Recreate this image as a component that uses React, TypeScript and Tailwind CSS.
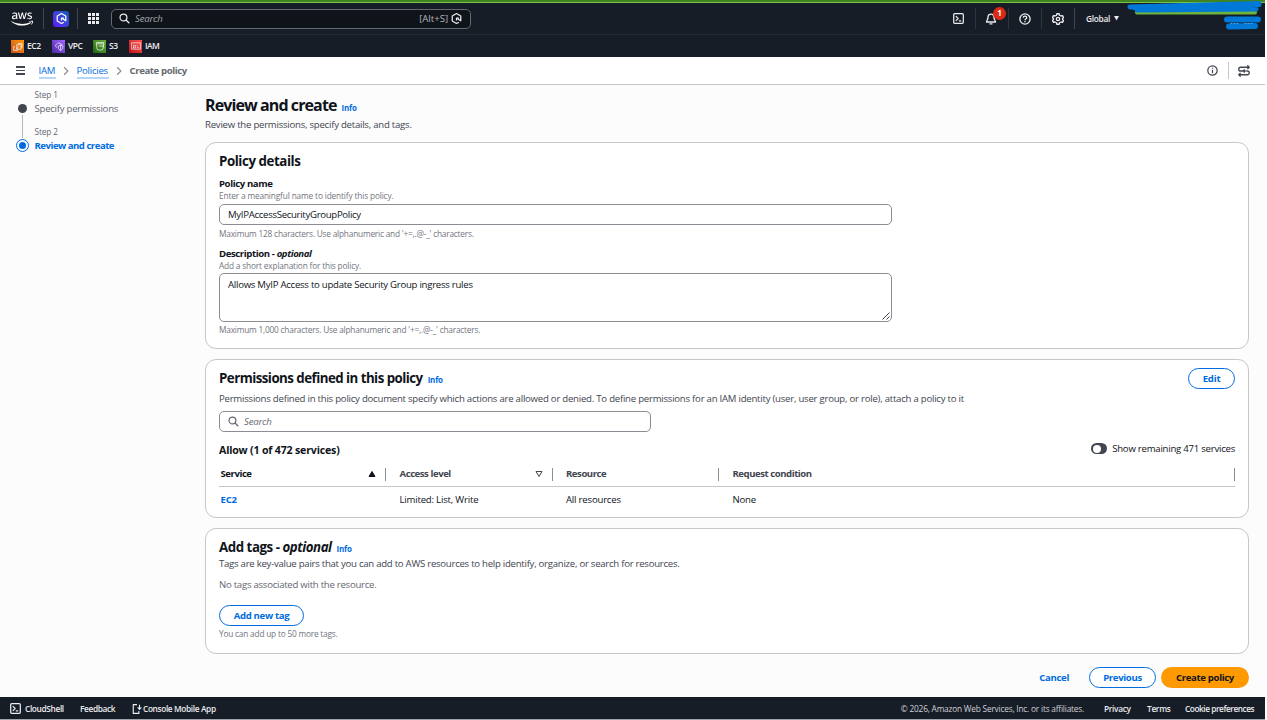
import React from 'react';
import { FaAws } from 'react-icons/fa';

const SERVICES = [
  { name: 'EC2', box: 'w-[41px]', bg: 'from-[#c8511b] to-[#ff9900]', tracking: 'tracking-[-0.45px]', icon: <path d="M6 6h7v7H6zM3 9H1v6h6v-2M8.500 6V4h6v6h-2M9 9L5 13" /> },
  { name: 'VPC', box: 'w-[41px]', bg: 'from-[#4d27a8] to-[#a166ff]', tracking: 'tracking-[-0.45px]', icon: <path d="M5 10H4a3 3 0 0 1 0-5a4 3.500 0 0 1 7 0a2 2 0 0 1 2 2M7 8l3.500-1.500L14 8v3c0 2-2 3.500-3.500 4C9 14.500 7 13 7 11zM10.500 7v8" /> },
  { name: 'S3', box: 'w-[36px]', bg: 'from-[#1b660f] to-[#6cae3e]', tracking: 'tracking-[-0.3px]', icon: <path d="M2 2.500h12v2H2zM2 4.500l1.500 9c1 1.500 8 1.500 9 0l1.500-9M6 8h7l1.500 2" /> },
  { name: 'IAM', box: 'w-[41px]', bg: 'from-[#bd0816] to-[#ff5252]', tracking: 'tracking-[-0.6px]', icon: <path d="M1 3h14v10H1zM4 11V7h3v4zM9 10h4M9 7h2" /> },
];

const COLUMNS = [
  { label: 'Service', value: 'EC2', width: 'w-[167px] pl-[1.500px]', sort: 'asc' },
  { label: 'Access level', value: 'Limited: List, Write', width: 'w-[167px] pl-[13.500px]', sort: 'none' },
  { label: 'Resource', value: 'All resources', width: 'w-[166px] pl-[13px]' },
  { label: 'Request condition', value: 'None', width: 'w-[516px] pl-[13.500px]' },
];

const Icon = ({ className, children }: { className: string; children: React.ReactNode }) => (
  <svg viewBox="0 0 16 16" className={className} fill="none" stroke="currentColor" strokeWidth="1.8" strokeLinejoin="round">
    {children}
  </svg>
);

const SearchIcon = ({ className }: { className: string }) => (
  <Icon className={className}>
    <circle cx="6.500" cy="6.500" r="5" />
    <path d="M10.200 10.200L15 15" />
  </Icon>
);

const TerminalIcon = ({ className }: { className: string }) => (
  <Icon className={className}>
    <rect x="1" y="1" width="14" height="14" rx="1.500" />
    <path d="M4 4.500L7.500 8L4 11.500M8.500 11.500H12" />
  </Icon>
);

const AssistantIcon = ({ className }: { className: string }) => (
  <Icon className={className}>
    <path d="M11.500 13.500L8 15.200L1.800 11.700V4.300L8 .8l6.200 3.500v7L9 8" />
    <path d="M8 11V7.500h3.500" />
  </Icon>
);

const Info = ({ className }: { className: string }) => (
  <a className={`text-[8px] leading-3 font-bold tracking-[-0.2px] text-[#006ce0] ${className}`}>Info</a>
);

const Card = ({ className, children }: { className: string; children: React.ReactNode }) => (
  <section className={`w-[1044px] rounded-[11px] border border-[#c6c6cd] bg-white px-[13px] ${className}`}>{children}</section>
);

const TopNav = () => (
  <header className="relative h-[57px] border-t-2 border-[#3f8420] bg-[#161d26] text-[#ebebf0]">
    <div className="flex h-[33px] items-center border-t border-b border-t-[#7cc14a] border-b-[#232b37]">
      <div className="ml-[11px] flex w-[32px]">
        <FaAws size={22} className="text-white" />
      </div>
      <div className="h-[21px] w-px bg-[#424650]" />
      <div className="ml-[9px] flex h-4 w-4 items-center justify-center rounded-[3px] bg-gradient-to-tr from-[#5a00ff] to-[#0057b8] text-white">
        <AssistantIcon className="h-[11px] w-[11px]" />
      </div>
      <div className="ml-[8px] h-[21px] w-px bg-[#424650]" />
      <div className="ml-[10px] grid grid-cols-3 gap-[1.500px]">
        {Array.from({ length: 9 }).map((_, i) => (
          <i key={i} className="h-[2.700px] w-[2.700px] bg-[#ebebf0]" />
        ))}
      </div>
      <div className="ml-[12px] flex h-[20px] w-[360px] items-center rounded-[5px] border border-[#656871] bg-[#0f141a] pr-[8px] pl-[7px]">
        <SearchIcon className="h-[11px] w-[11px]" />
        <span className="mt-px ml-[5px] text-[9.600px] tracking-[-0.2px] italic text-[#a4a4ad]">Search</span>
        <span className="mt-px ml-auto text-[9.600px] text-[#b4b4bb]">[Alt+S]</span>
        <AssistantIcon className="ml-[3px] h-[11px] w-[11px]" />
      </div>
      <div className="ml-[482px] flex h-[21px] items-center">
        <TerminalIcon className="h-[11px] w-[11px]" />
        <div className="ml-[11px] h-full w-px bg-[#2c3440]" />
        <div className="relative ml-[9px]">
          <Icon className="h-[12px] w-[12px]">
            <path d="M8 1.500c-3 0-4 2-4 4.500c0 3-2 4-2 6h12c0-2-2-3-2-6c0-2.500-1-4.500-4-4.500zM6 14.500h4" />
          </Icon>
          <b className="absolute -top-[6px] left-[8px] flex h-[13px] w-[13px] items-center justify-center rounded-full bg-[#db2b12] text-[8px] text-white">1</b>
        </div>
        <div className="ml-[11px] h-full w-px bg-[#2c3440]" />
        <Icon className="ml-[10px] h-[12px] w-[12px]">
          <circle cx="8" cy="8" r="6.800" />
          <path d="M5.700 6.200C5.700 3.500 10.300 3.500 10.300 6.200C10.300 7.800 8 7.700 8 9.700M8 10.800v1.500" />
        </Icon>
        <div className="ml-[10px] h-full w-px bg-[#2c3440]" />
        <Icon className="ml-[10px] h-[12px] w-[12px]">
          <path d="M6.500 1h3l.5 2l2 1l2-.5l1.300 2.500L14 7.500v1l1.300 1.500L14 12.500l-2-.5l-2 1l-.5 2h-3L6 13l-2-1l-2 .5L.700 10L2 8.500v-1L.700 6L2 3.500L4 4l2-1z" />
          <circle cx="8" cy="8" r="2.200" />
        </Icon>
        <div className="ml-[10px] h-full w-px bg-[#424650]" />
        <span className="ml-[11px] w-[28px] whitespace-nowrap text-[8.300px] font-semibold tracking-[-0.3px]">Global</span>
        <svg viewBox="0 0 6 6" className="h-[5px] w-[5px] fill-current"><path d="M0 0h6L3 5.500z" /></svg>
      </div>
    </div>
    <div className="flex h-[22px] items-center pl-[11px]">
      {SERVICES.map((s) => (
        <div key={s.name} className={`flex items-center ${s.box}`}>
          <div className={`flex h-[13px] w-[13px] shrink-0 items-center justify-center bg-gradient-to-tr ${s.bg}`}>
            <svg viewBox="0 0 16 16" className="h-[10px] w-[10px] stroke-white" fill="none" strokeWidth="1.100">{s.icon}</svg>
          </div>
          <span className={`ml-[3px] text-[8.500px] font-semibold ${s.tracking}`}>{s.name}</span>
        </div>
      ))}
    </div>
    {/* hidden account name */}
    <svg className="absolute -top-[2px] left-[1124px] h-[32px] w-[142px]" viewBox="1124 0 142 32" fill="none" strokeLinecap="round" strokeLinejoin="round">
      <path d="M1137 12.500H1255" stroke="#6fb33f" strokeWidth="4" />
      <path d="M1130 7L1259 3.500M1135 8L1259 4.500M1137 10L1256 9M1160 7H1254" stroke="#0078d7" strokeWidth="5" />
      <path d="M1227 19.500H1258M1229 26.500L1255 26" stroke="#0078d7" strokeWidth="6" />
      <path d="M1231 23.500h8M1245 23.500h8" stroke="#5da7df" strokeWidth="1" strokeDasharray="1 2" />
    </svg>
  </header>
);

const Breadcrumbs = () => (
  <nav className="flex h-[28px] items-center border-b border-[#c6c6cd] bg-white pl-[16px] text-[9.600px] text-[#424650]">
    <div className="mr-[13.500px] flex w-[9px] flex-col gap-[2px]">
      <i className="h-[1.500px] bg-[#424650]" />
      <i className="h-[1.500px] bg-[#424650]" />
      <i className="h-[1.500px] bg-[#424650]" />
    </div>
    <a className="mt-[2px] w-[17px] border-b-2 border-[#b5d6fb] leading-[12px] tracking-[-0.3px] whitespace-nowrap text-[#006ce0]">IAM</a>
    <Icon className="mx-[5.500px] h-[10px] w-[10px] text-[#8c8c94]"><path d="M5 2l6 6l-6 6" /></Icon>
    <a className="mt-[2px] w-[32px] border-b-2 border-[#b5d6fb] leading-[12px] tracking-[-0.25px] whitespace-nowrap text-[#006ce0]">Policies</a>
    <Icon className="mx-[5.500px] h-[10px] w-[10px] text-[#8c8c94]"><path d="M5 2l6 6l-6 6" /></Icon>
    <span className="mt-px font-bold tracking-[-0.4px] text-[#656871]">Create policy</span>
    <div className="mr-[15px] ml-auto flex items-center">
      <Icon className="h-[11px] w-[11px]">
        <circle cx="8" cy="8" r="6.800" />
        <path d="M8 7v5M8 4v1.600" />
      </Icon>
      <div className="ml-[10px] h-[17px] w-px bg-[#c6c6cd]" />
      <Icon className="ml-[9px] h-[12px] w-[12px]">
        <path d="M14 3H3.500a2.500 2.500 0 0 0 0 5h6M11 8h1.500a2.500 2.500 0 0 1 0 5H1M12.500 .5L15 3L12.500 5.500M3.500 10.500L1 13l2.500 2.500M7.500 6l2 2L7.500 10" />
      </Icon>
    </div>
  </nav>
);

const Steps = () => (
  <aside className="flex w-[205px] shrink-0 pt-[3px] pl-[16px]">
    <div className="flex w-[13px] flex-col items-center pt-[16px]">
      <div className="h-[9px] w-[9px] rounded-full bg-[#424650]" />
      <div className="mt-[2px] h-[23px] w-px bg-[#b4b4bb]" />
      <div className="mt-px flex h-[13px] w-[13px] items-center justify-center rounded-full border-[1.500px] border-[#006ce0]">
        <div className="h-[7px] w-[7px] rounded-full bg-[#006ce0]" />
      </div>
    </div>
    <div className="ml-[5.500px] whitespace-nowrap text-[#656871]">
      <p className="h-[13px] text-[8.300px] leading-[14px] tracking-[-0.15px]">Step 1</p>
      <p className="h-[24px] text-[9.600px] leading-[15px] tracking-[-0.25px]">Specify permissions</p>
      <p className="h-[13px] text-[8.300px] leading-[14px] tracking-[-0.15px]">Step 2</p>
      <p className="text-[9.600px] leading-[15px] font-bold tracking-[-0.5px] text-[#006ce0]">Review and create</p>
    </div>
  </aside>
);

const PolicyDetails = () => (
  <Card className="h-[207px] pt-[9px]">
    <h2 className="text-[13.300px] leading-[18px] font-bold tracking-[-0.43px]">Policy details</h2>
    <h3 className="mt-[7px] text-[9.600px] leading-[13px] font-bold tracking-[-0.4px]">Policy name</h3>
    <p className="text-[8.300px] leading-[11px] tracking-[-0.15px] text-[#72757e]">Enter a meaningful name to identify this policy.</p>
    <div className="mt-[3px] h-[21px] w-[673px] rounded-[5px] border border-[#8c8c94] pl-[8px] text-[9.600px] leading-[19px] tracking-[-0.3px]">MyIPAccessSecurityGroupPolicy</div>
    <p className="mt-[3px] text-[8.300px] leading-[12px] tracking-[-0.2px] text-[#72757e]">Maximum 128 characters. Use alphanumeric and '+=,.@-_' characters.</p>
    <h3 className="mt-[7px] text-[9.600px] leading-[13px] font-bold tracking-[-0.4px]">Description - <em>optional</em></h3>
    <p className="text-[8.300px] leading-[11px] tracking-[-0.17px] text-[#72757e]">Add a short explanation for this policy.</p>
    <div className="mt-[2px] flex h-[49px] w-[673px] justify-between rounded-[5px] border border-[#8c8c94] pl-[8px] text-[9.600px] leading-[21px] tracking-[-0.26px]">
      Allows MyIP Access to update Security Group ingress rules
      <svg viewBox="0 0 8 8" className="mr-px mb-px h-[8px] w-[8px] self-end stroke-[#424650]" fill="none"><path d="M.5 7.500l7-7M4.500 7.500l3-3" /></svg>
    </div>
    <p className="mt-[2px] text-[8.300px] leading-[12px] tracking-[-0.2px] text-[#72757e]">Maximum 1,000 characters. Use alphanumeric and '+=,.@-_' characters.</p>
  </Card>
);

const Permissions = () => (
  <Card className="mt-[10px] h-[159px] pt-[8px]">
    <div className="flex h-[21px] items-center">
      <h2 className="mb-px text-[13.300px] leading-[20px] font-bold tracking-[-0.53px]">Permissions defined in this policy</h2>
      <Info className="mt-[3px] ml-[5px]" />
      <button className="ml-auto h-[21px] w-[47px] rounded-full border-[1.500px] border-[#006ce0] text-[9.600px] font-bold tracking-[-0.2px] text-[#006ce0]">Edit</button>
    </div>
    <p className="mt-[2px] text-[9.600px] leading-[16px] tracking-[-0.235px] whitespace-nowrap text-[#424650]">
      Permissions defined in this policy document specify which actions are allowed or denied. To define permissions for an IAM identity (user, user group, or role), attach a policy to it
    </p>
    <div className="mt-[4px] flex h-[21px] w-[432px] items-center rounded-[5px] border border-[#8c8c94] pl-[8px]">
      <SearchIcon className="h-[11px] w-[11px] text-[#656871]" />
      <span className="mt-px ml-[5px] text-[9.600px] tracking-[-0.2px] italic text-[#656871]">Search</span>
    </div>
    <div className="mt-[9px] flex h-[19px] items-center">
      <h3 className="mb-px text-[10.600px] leading-[16px] font-bold tracking-[-0.18px]">Allow (1 of 472 services)</h3>
      <div className="mb-[4px] ml-auto flex h-[11px] w-[16px] items-center rounded-full bg-[#424650] pl-[1.500px]">
        <div className="h-[8px] w-[8px] rounded-full bg-white" />
      </div>
      <span className="mb-[3px] ml-[5px] text-[9.600px] tracking-[-0.24px]">Show remaining 471 services</span>
    </div>
    <div className="mt-[2px] flex h-[25px] items-center border-b border-[#c6c6cd] text-[9.600px] font-bold tracking-[-0.46px] text-[#424650]">
      {COLUMNS.map((c) => (
        <div key={c.label} className={`flex h-[13px] shrink-0 items-center justify-between border-r border-[#8c8c94] pr-[9px] first:text-[#0f141a] ${c.width}`}>
          {c.label}
          {c.sort && (
            <svg viewBox="0 0 8 8" className="h-[8px] w-[8px] stroke-current" fill={c.sort === 'asc' ? 'currentColor' : 'none'}>
              <path d={c.sort === 'asc' ? 'M1 6.500h6L4 1.500z' : 'M1 1.500h6L4 6.500z'} />
            </svg>
          )}
        </div>
      ))}
    </div>
    <div className="flex h-[26px] items-center text-[9.600px] tracking-[-0.2px]">
      {COLUMNS.map((c) => (
        <div key={c.label} className={`shrink-0 first:font-bold first:text-[#006ce0] ${c.width}`}>{c.value}</div>
      ))}
    </div>
  </Card>
);

const Tags = () => (
  <Card className="mt-[10px] h-[126px] pt-[9px]">
    <div className="flex h-[18px] items-center">
      <h2 className="text-[13.300px] leading-[18px] font-bold tracking-[-0.46px]">Add tags - <em>optional</em></h2>
      <Info className="mt-[3px] ml-[5px]" />
    </div>
    <p className="text-[9.600px] leading-[15px] tracking-[-0.26px] text-[#424650]">Tags are key-value pairs that you can add to AWS resources to help identify, organize, or search for resources.</p>
    <p className="mt-[7px] text-[9.600px] leading-[14px] tracking-[-0.26px] text-[#656871]">No tags associated with the resource.</p>
    <button className="mt-[13px] block h-[21px] w-[85px] rounded-full border-[1.500px] border-[#006ce0] pt-px text-[9.600px] font-bold tracking-[-0.35px] text-[#006ce0]">Add new tag</button>
    <p className="mt-[2px] text-[8.300px] leading-[12px] tracking-[-0.2px] text-[#72757e]">You can add up to 50 more tags.</p>
  </Card>
);

const Footer = () => (
  <footer className="mt-[9px] flex h-[22px] items-center bg-[#161d26] pt-px pr-[11px] pl-[10px] text-[8.300px] whitespace-nowrap text-[#ebebf0]">
    <TerminalIcon className="h-[11px] w-[11px]" />
    <span className="ml-[4px] w-[55px] font-semibold tracking-[-0.35px]">CloudShell</span>
    <span className="w-[52px] font-semibold tracking-[-0.35px]">Feedback</span>
    <Icon className="h-[10px] w-[10px]">
      <path d="M8 1H2v14h9v-4M12 1v7M9 5.500l3 3l3-3" />
    </Icon>
    <span className="ml-px font-semibold tracking-[-0.36px]">Console Mobile App</span>
    <span className="ml-auto tracking-[-0.2px] text-[#d0d0d8]">© 2026, Amazon Web Services, Inc. or its affiliates.</span>
    <span className="ml-[20px] w-[43px] font-semibold tracking-[-0.3px]">Privacy</span>
    <span className="w-[38px] font-semibold tracking-[-0.3px]">Terms</span>
    <span className="w-[69px] font-semibold tracking-[-0.45px]">Cookie preferences</span>
  </footer>
);

export default function App() {
  return (
    <div className="h-[720px] w-[1267px] overflow-hidden bg-white font-['Open_Sans','Noto_Sans',sans-serif] leading-[14px] text-[#0f141a]">
      <div className="h-[720px] w-[1265px] bg-[#fcfcfd]">
        <TopNav />
        <Breadcrumbs />
        <div className="flex">
          <Steps />
          <main>
            <div className="flex h-[31px] items-center pt-[9px]">
              <h1 className="text-[16px] leading-[24px] font-bold tracking-[-0.9px]">Review and create</h1>
              <Info className="mt-[5px] ml-[5px]" />
            </div>
            <p className="mt-[2px] mb-[10px] text-[9.600px] leading-[14px] tracking-[-0.24px] text-[#424650]">Review the permissions, specify details, and tags.</p>
            <PolicyDetails />
            <Permissions />
            <Tags />
            <div className="mt-[12px] flex h-[22px] w-[1044px] items-center justify-end text-[9.600px] font-bold tracking-[-0.35px] text-[#006ce0]">
              <button className="mt-px mr-[20px]">Cancel</button>
              <button className="h-[21px] w-[67px] rounded-full border-[1.500px] border-[#006ce0] bg-white pt-px">Previous</button>
              <button className="ml-[5px] h-[21px] w-[88px] rounded-full bg-[#ff9900] pt-px text-[#0f141a]">Create policy</button>
            </div>
          </main>
        </div>
        <Footer />
        <div className="h-px bg-[#a4a4ad]" />
      </div>
    </div>
  );
}
